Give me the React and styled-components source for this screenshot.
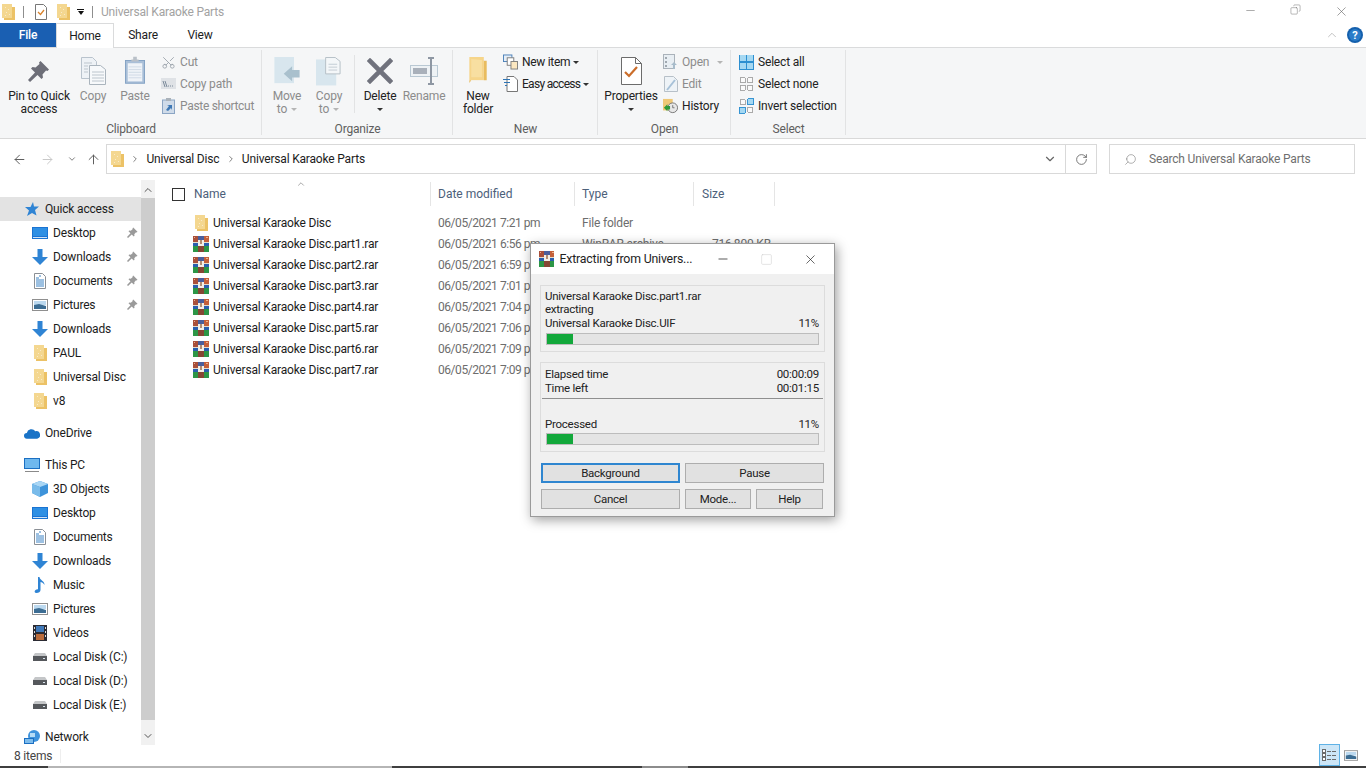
import React from "react";
import styled, { createGlobalStyle } from "styled-components";
import { ArrowLeft, ArrowRight, ArrowUp, ChevronDown, ChevronRight, ChevronUp, RotateCw, Search, Scissors, Minus, X, Square, Copy as CopyIc } from "lucide-react";

const Global = createGlobalStyle`
  html, body { margin: 0; padding: 0; background: #fff; overflow: hidden; }
  body { font-family: Roboto, "Noto Sans", sans-serif; font-size: 12px; letter-spacing: -0.18px; color: #1c1c1c; }
  * { box-sizing: border-box; }
`;

/* ---------- drawn icons ---------- */
const Folder = ({ w = 13, h = 16 }) => (
  <svg width={w} height={h} viewBox="0 0 13 16">
    <path d="M0 0h10v14H0z" fill="#f6dc9c" />
    <path d="M0 0h10v14H0z" fill="#f2cf7c" opacity=".35" />
    <path d="M10 3h3v13H2v-2h8z" fill="#ecc266" />
    <path d="M3 3h1v1H3zM6 5h1v1H6zM4 8h1v1H4zM7 10h1v1H7zM3 11h1v1H3z" fill="#fff" opacity=".5" />
  </svg>
);
const Rar = ({ s = 16 }) => (
  <svg width={s} height={s} viewBox="0 0 16 16" shapeRendering="crispEdges">
    <rect x="0" y="0" width="5" height="7" fill="#a9503a" />
    <rect x="5" y="0" width="6" height="5" fill="#4a5f9c" />
    <rect x="11" y="0" width="5" height="7" fill="#c4603a" />
    <rect x="1" y="1" width="1" height="1" fill="#e9b08f" />
    <rect x="13" y="1" width="2" height="1" fill="#efb48d" />
    <rect x="0" y="7" width="5" height="3" fill="#2a5fae" />
    <rect x="0" y="10" width="5" height="6" fill="#2c9646" />
    <rect x="5" y="10" width="6" height="6" fill="#864634" />
    <rect x="11" y="7" width="5" height="3" fill="#2a5fae" />
    <rect x="11" y="10" width="5" height="6" fill="#2c9646" />
    <rect x="5" y="4" width="6" height="6" fill="#f4efe6" />
    <rect x="7" y="4" width="2" height="4" fill="#b28d73" />
    <rect x="0" y="6" width="5" height="1" fill="#e6dccb" />
    <rect x="11" y="6" width="5" height="1" fill="#e6dccb" />
  </svg>
);
const Pin = ({ s = 22, c = "#6d6e78" }) => (
  <svg width={s} height={s} viewBox="0 0 22 22">
    <path d="M12.500 1L21 9.500l-1.500 1.500-1.500-.5-3.500 4 .5 3-1.500 1.500-4-4L2 22l-2-2 7-7.500-4-4L4.500 7l3 .5 4-3.500L11 2.500z" fill={c} />
  </svg>
);
const DocPair = () => (
  <svg width="25" height="28" viewBox="0 0 25 28">
    <path d="M.5.5h11l4 4v17H.5z" fill="#eef2f6" stroke="#b9c3cd" />
    <path d="M8.500 8.500h11l5 4v15h-16z" fill="#f7f9fb" stroke="#aab4bd" />
    <path d="M11 15h12M11 18h12M11 21h12M11 24h12M3 6h8M3 9h4M3 12h4M3 15h4" stroke="#bcc5cd" />
  </svg>
);
const Clip = () => (
  <svg width="20" height="29" viewBox="0 0 22 30">
    <rect x=".5" y="4" width="21" height="25" fill="#a9bfd8" stroke="#7f9fc2" />
    <rect x="3" y="7" width="16" height="20" fill="#eff3f8" />
    <path d="M4 11h14M4 14h14M4 17h14M4 20h14M4 23h14" stroke="#cdd8e4" />
    <path d="M7 5h8V3h-2V0H9v3H7z" fill="#b9c0c8" />
  </svg>
);
const Scis = () => <Scissors size={15} color="#9aa2aa" strokeWidth={1.4} style={{ transform: "rotate(-90deg)" }} />;
const PathIc = () => (
  <svg width="15" height="12" viewBox="0 0 15 12">
    <rect width="15" height="11" fill="#dfe2e6" />
    <path d="M2 3l2 6M4 3l2 6M7 8h1M9 8h1M11 8h1" stroke="#7b8a9a" />
  </svg>
);
const ShortcutIc = () => (
  <svg width="13" height="16" viewBox="0 0 13 16">
    <rect x=".5" y="2" width="12" height="13.500" fill="#cfdbe9" stroke="#8ba5c4" />
    <path d="M4 0h5v3H4z" fill="#aab2ba" />
    <path d="M4 12l3-4-2-1h5v5l-1-2-3 3z" fill="#3e78b5" />
  </svg>
);
const MoveIc = () => (
  <svg width="26" height="28" viewBox="0 0 27 30">
    <rect width="21" height="28" fill="#d8e6ee" />
    <path d="M10 18l9-8v4h8v8h-8v4z" fill="#a9c0cd" />
  </svg>
);
const CopyToIc = () => (
  <svg width="26" height="30" viewBox="0 0 27 30">
    <rect y="3" width="21" height="27" fill="#d8e6ee" />
    <path d="M10 1h10l5 4v13H10z" fill="#f4f7f9" stroke="#b4bec6" />
    <path d="M13 8h9M13 11h9M13 14h9" stroke="#c3ccd3" />
  </svg>
);
const DeleteIc = () => (
  <svg width="26" height="26" viewBox="0 0 26 26">
    <path d="M3 3l20 20M23 3L3 23" stroke="#70727d" strokeWidth="4.600" strokeLinecap="square" />
  </svg>
);
const RenameIc = () => (
  <svg width="29" height="28" viewBox="0 0 29 28">
    <rect x=".5" y="8.500" width="27" height="11" fill="#eef2f5" stroke="#b9c8d3" />
    <rect x="3" y="11" width="14" height="6" fill="#a9b0ba" />
    <path d="M21 1v26M18 1h6M18 27h6" stroke="#8e97a3" strokeWidth="2" />
  </svg>
);
const BigFolder = () => (
  <svg width="19" height="27" viewBox="0 0 19 28">
    <path d="M0 0h15v24H0z" fill="#f6d58a" />
    <path d="M15 4h3v20H2l-2 3V24h15z" fill="#e9bc5e" />
    <path d="M2 2l11 1v18H2z" fill="#f9e2ab" opacity=".7" />
  </svg>
);
const NewItemIc = () => (
  <svg width="16" height="16" viewBox="0 0 16 16">
    <rect x=".5" y=".5" width="9" height="7" fill="#e5eef7" stroke="#4a7fb8" />
    <rect x="4.500" y="3.500" width="7" height="8" fill="#fff" stroke="#7d7d7d" />
    <rect x="8.500" y="7.500" width="7" height="8" fill="#fbe7c0" stroke="#7d7d7d" />
  </svg>
);
const EasyIc = () => (
  <svg width="15" height="16" viewBox="0 0 15 16">
    <path d="M4 .5h7l3.500 3.500v11.500H4z" fill="#fff" stroke="#777" />
    <path d="M0 3.500h7M1 6.500h6M2 9.500h2" stroke="#2f75b5" />
  </svg>
);
const PropsIc = () => (
  <svg width="21" height="28" viewBox="0 0 21 28">
    <path d="M.5.500h14l6 6v21H.5z" fill="#fff" stroke="#6c6c6c" />
    <path d="M14.500.5v6h6" fill="none" stroke="#6c6c6c" />
    <path d="M4 15l4 4 8-9" fill="none" stroke="#cb6d2a" strokeWidth="2.200" />
  </svg>
);
const SmallProps = () => (
  <svg width="12" height="16" viewBox="0 0 12 16">
    <path d="M.5.500h8l3 3v12H.5z" fill="#fff" stroke="#777" />
    <path d="M3 8l2.500 2.500L9 6" fill="none" stroke="#d9822b" strokeWidth="1.300" />
  </svg>
);
const OpenIc = () => (
  <svg width="15" height="16" viewBox="0 0 15 16">
    <rect x=".5" y=".5" width="11" height="14" fill="#e8eef3" stroke="#aab2ba" />
    <path d="M2 3h2v2H2zM2 7h2v2H2zM2 11h2v2H2z" fill="#a0a8b0" />
    <path d="M11 8l3 3h-2v4h-2v-4H8z" fill="#a8bccb" />
  </svg>
);
const EditIc = () => (
  <svg width="14" height="16" viewBox="0 0 14 16">
    <path d="M.5.500h9l4 4v11H.5z" fill="#eef3f7" stroke="#b7c0c8" />
    <path d="M3 14l8-10" stroke="#a7c1d8" strokeWidth="2" />
  </svg>
);
const HistoryIc = () => (
  <svg width="17" height="16" viewBox="0 0 17 16">
    <rect width="11" height="13" fill="#efc876" />
    <circle cx="11" cy="10" r="5.500" fill="#e7e7e7" stroke="#6d6d6d" />
    <path d="M11 7v3h2" fill="none" stroke="#6d6d6d" />
    <path d="M1 10l4-4v2h3v4H5v2z" fill="#2f9a3a" />
  </svg>
);
const SelAll = () => (
  <svg width="16" height="16" viewBox="0 0 16 16" shapeRendering="crispEdges">
    <rect width="16" height="16" fill="#2d8fd0" />
    <path d="M1 1h6v6H1zM9 1h6v6H9zM1 9h6v6H1zM9 9h6v6H9z" fill="#a5d8f2" />
  </svg>
);
const SelNone = () => (
  <svg width="16" height="16" viewBox="0 0 16 16" shapeRendering="crispEdges">
    <path d="M1.500 1.500h5v5h-5zM9.500 1.500h5v5h-5zM1.500 9.500h5v5h-5zM9.500 9.500h5v5h-5z" fill="#fafafa" stroke="#a4a4a4" />
  </svg>
);
const SelInv = () => (
  <svg width="16" height="16" viewBox="0 0 16 16" shapeRendering="crispEdges">
    <path d="M1.500 1.500h5v5h-5zM9.500 9.500h5v5h-5z" fill="#fafafa" stroke="#a4a4a4" />
    <path d="M9.500 .5h6v6h-6zM.5 9.500h6v6h-6z" fill="#a5d8f2" stroke="#2d8fd0" />
  </svg>
);
const Star = () => (
  <svg width="14" height="14" viewBox="0 0 14 14">
    <path d="M8 0l1 4.500h5L10 8l1.500 5.500L7 11l-5 3 2-5.500L0 5h5.500z" fill="#2f84d4" />
  </svg>
);
const Monitor = () => (
  <svg width="16" height="12" viewBox="0 0 16 12" shapeRendering="crispEdges">
    <rect width="16" height="12" fill="#1a73d2" />
    <rect x="1" y="1" width="14" height="8" fill="#2d8fe4" />
    <rect x="1" y="10" width="14" height="1" fill="#cfe2f6" />
  </svg>
);
const Down = () => (
  <svg width="16" height="16" viewBox="0 0 16 16">
    <path d="M5.500 0h5v8H16l-8 8-8-8h5.500z" fill="#2f84d4" />
  </svg>
);
const Docs = () => (
  <svg width="12" height="16" viewBox="0 0 12 16">
    <path d="M.5.500h8l3 3v12H.5z" fill="#fff" stroke="#8a8f95" />
    <path d="M2 5h3M2 7h8M2 9h8M2 11h8M2 13h8M5 3h2" stroke="#3b82c4" />
  </svg>
);
const Pics = ({ w = 16, h = 12 }) => (
  <svg width={w} height={h} viewBox="0 0 16 12">
    <rect x=".5" y=".5" width="15" height="11" fill="#fff" stroke="#8f8f8f" />
    <rect x="2" y="2" width="12" height="4" fill="#bcd9ef" />
    <path d="M2 6l5-1 7 2v3H2z" fill="#3c6d93" />
  </svg>
);
const Cloud = () => (
  <svg width="17" height="11" viewBox="0 0 17 11">
    <path d="M3 11a3 3 0 010-6 5 5 0 019-2 4 4 0 012 8z" fill="#1a73c7" />
  </svg>
);
const PC = () => (
  <svg width="16" height="15" viewBox="0 0 16 15" shapeRendering="crispEdges">
    <rect width="16" height="11" fill="#1b6fc2" />
    <rect x="1" y="1" width="14" height="9" fill="#6fb8ee" />
    <rect x="1" y="13" width="14" height="1" fill="#8a8a8a" />
  </svg>
);
const Cube = () => (
  <svg width="16" height="16" viewBox="0 0 16 16">
    <path d="M8 0l8 3v9l-8 4-8-4V3z" fill="#3d93da" />
    <path d="M8 0l8 3-8 3-8-3z" fill="#a9d6f4" />
    <path d="M0 3l8 3v10l-8-4z" fill="#79bbea" />
  </svg>
);
const Music = () => (
  <svg width="12" height="16" viewBox="0 0 12 16">
    <path d="M4 0h1.500c0 3 5.500 4 5 8-1-2-3-3-4-3v8c0 2-2 3-4 3s-2.500-2-1-3 2-1 2.500-.5z" fill="#2f84d4" />
  </svg>
);
const Film = () => (
  <svg width="14" height="16" viewBox="0 0 14 16" shapeRendering="crispEdges">
    <rect width="14" height="16" fill="#2b2b33" />
    <rect x="3" y="1" width="8" height="6" fill="#3f78b8" />
    <rect x="3" y="9" width="8" height="6" fill="#bb6c3c" />
    <path d="M1 2h1v2H1zM1 6h1v2H1zM1 10h1v2H1zM12 2h1v2h-1zM12 6h1v2h-1zM12 10h1v2h-1z" fill="#ddd" />
  </svg>
);
const Disk = () => (
  <svg width="14" height="8" viewBox="0 0 14 8">
    <path d="M2 0h10l2 3H0z" fill="#c4c6c8" />
    <rect y="3" width="14" height="5" fill="#55585c" />
    <rect x="10" y="5" width="2" height="1" fill="#d9e4ee" />
  </svg>
);
const Net = () => (
  <svg width="16" height="15" viewBox="0 0 16 15">
    <circle cx="10" cy="6" r="6" fill="#3f93dc" />
    <path d="M6 3h5v4H6z" fill="#b6dcf6" />
    <rect y="8" width="10" height="6" fill="#1b6fc2" />
    <rect x="1" y="9" width="8" height="4" fill="#7ebcec" />
  </svg>
);
const Help = () => (
  <svg width="16" height="16" viewBox="0 0 16 16">
    <circle cx="8" cy="8" r="8" fill="#1560ad" />
    <circle cx="8" cy="8" r="6" fill="#2b7cc9" />
    <text x="8" y="12" textAnchor="middle" fontSize="11" fontWeight="700" fill="#fff" fontFamily="Roboto">?</text>
  </svg>
);
const DetailsIc = () => (
  <svg width="15" height="14" viewBox="0 0 15 14" shapeRendering="crispEdges">
    <path d="M.5 1.500h3v3h-3zM.5 5.500h3v3h-3zM.5 9.500h3v3h-3z" fill="#fff" stroke="#6b6b6b" />
    <path d="M5 3h4M10 3h4M5 7h4M10 7h4M5 11h4M10 11h4" stroke="#6b6b6b" />
  </svg>
);

/* ---------- shell ---------- */
const Shell = styled.div`
  position: relative;
  width: 1366px;
  height: 768px;
  display: flex;
  flex-direction: column;
  overflow: hidden;
  background: #fff;
`;
const TitleBar = styled.div`
  height: 23px;
  display: flex;
  align-items: center;
  padding-left: 2px;
`;
const QatIcon = styled.span`
  display: flex;
  margin-left: ${(p) => p.$ml || 0}px;
`;
const QatSep = styled.span`
  width: 1px;
  height: 12px;
  background: #8e8e8e;
  margin-left: ${(p) => p.$ml || 0}px;
`;
const QatDrop = styled.span`
  display: flex;
  flex-direction: column;
  align-items: center;
  gap: 1px;
  margin-left: 7px;
  &::before { content: ""; width: 7px; height: 1px; background: #111; }
  &::after { content: ""; border: 3.5px solid transparent; border-top: 4px solid #111; border-bottom: 0; }
`;
const WinTitle = styled.span`
  margin-left: 8px;
  color: #a2a2a2;
`;
const WinCtrls = styled.div`
  margin-left: auto;
  display: flex;
  color: #666;
  margin-top: -1px;
  padding-right: 2px;
`;
const WinCtrl = styled.span`
  width: 45.500px;
  display: flex;
  justify-content: center;
`;
const TabBar = styled.div`
  height: 24px;
  display: flex;
  align-items: stretch;
  position: relative;
`;
const FileTab = styled.div`
  width: 56px;
  background: #1a5fb2;
  color: #fff;
  display: flex;
  align-items: center;
  justify-content: center;
  font-weight: 500;
`;
const Tab = styled.div`
  width: ${(p) => p.$w}px;
  display: flex;
  align-items: center;
  justify-content: center;
  background: #fff;
  ${(p) => p.$on && `border: 1px solid #dadbdc; border-bottom: 0; z-index: 1; margin-bottom: -1px; height: 25px;`}
`;
const TabEnd = styled.div`
  margin-left: auto;
  display: flex;
  align-items: center;
  gap: 8px;
  padding-right: 3px;
  color: #a8a8a8;
`;
const Ribbon = styled.div`
  height: 92px;
  display: flex;
  background: #f5f6f7;
  border-top: 1px solid #dadbdc;
  border-bottom: 1px solid #d9d9d9;
`;
const Group = styled.section`
  width: ${(p) => p.$w}px;
  display: flex;
  flex-direction: column;
  padding-top: 3px;
  position: relative;
  &::after {
    content: "";
    position: absolute;
    right: 0;
    top: 2px;
    bottom: 3px;
    width: 1px;
    background: #e2e3e4;
  }
`;
const GroupBody = styled.div`
  height: 71px;
  display: flex;
  padding-left: ${(p) => p.$pl || 0}px;
`;
const GroupLabel = styled.div`
  text-align: center;
  color: #5e5e5e;
  line-height: 16px;
  margin-top: auto;
  height: 17px;
`;
const Large = styled.div`
  width: ${(p) => p.$w}px;
  flex: none;
  display: flex;
  flex-direction: column;
  align-items: center;
  text-align: center;
  line-height: 13px;
  color: ${(p) => (p.$off ? "#8c8c8c" : "#222")};
`;
const LargeIcon = styled.div`
  height: 39px;
  display: flex;
  align-items: center;
  justify-content: center;
`;
const LargeText = styled.div`
  white-space: nowrap;
`;
const Caret = styled.i`
  display: inline-block;
  border: 3px solid transparent;
  border-top: 3px solid ${(p) => (p.$off ? "#b5b5b5" : "#333")};
  border-bottom: 0;
  vertical-align: middle;
  margin-left: ${(p) => p.$ml ?? 4}px;
`;
const VSep = styled.div`
  width: 1px;
  height: 58px;
  background: #e2e3e4;
  margin: 4px 3px 0 4px;
  flex: none;
`;
const SmallCol = styled.div`
  display: flex;
  flex-direction: column;
  margin-left: ${(p) => p.$ml || 0}px;
`;
const Small = styled.div`
  height: 22px;
  display: flex;
  align-items: center;
  gap: 4px;
  color: ${(p) => (p.$off ? "#8c8c8c" : "#222")};
  white-space: nowrap;
  letter-spacing: ${(p) => p.$ls ?? -0.18}px;
`;
const SmallIcon = styled.span`
  width: ${(p) => p.$w || 15}px;
  display: flex;
  justify-content: center;
`;
const AddressRow = styled.div`
  height: 41px;
  flex: none;
  display: flex;
  align-items: center;
  padding: 0 0 1px 11px;
`;
const NavBtn = styled.span`
  display: flex;
  flex: none;
  width: ${(p) => p.$w}px;
  margin-left: ${(p) => p.$ml || 0}px;
  justify-content: center;
  color: ${(p) => p.$c};
  svg { flex: none; }
`;
const Field = styled.div`
  height: 30px;
  border: 1px solid #d9d9d9;
  display: flex;
  align-items: center;
`;
const AddressBox = styled(Field)`
  width: 991px;
  margin-left: 5px;
  padding-left: 4px;
`;
const Crumb = styled.span`
  color: #1c1c1c;
`;
const CrumbChev = styled.span`
  display: flex;
  width: 22.500px;
  justify-content: center;
  color: #666;
`;
const BoxBtn = styled.span`
  width: 31px;
  height: 100%;
  display: flex;
  align-items: center;
  justify-content: center;
  color: #666;
  border-left: ${(p) => (p.$line ? "1px solid #d9d9d9" : "0")};
  margin-left: ${(p) => (p.$auto ? "auto" : "0")};
`;
const SearchBox = styled(Field)`
  width: 246px;
  margin-left: 12px;
  padding-left: 14px;
  gap: 12px;
  color: #6f6f6f;
`;
const Main = styled.div`
  flex: 1;
  display: flex;
  min-height: 0;
`;
const Nav = styled.nav`
  width: 141px;
  padding-top: 17px;
  flex: none;
`;
const NavRow = styled.div`
  height: 24px;
  display: flex;
  align-items: center;
  padding-left: ${(p) => (p.$top ? 24 : 32)}px;
  margin-bottom: ${(p) => (p.$end ? 8 : 0)}px;
  background: ${(p) => (p.$on ? "#e3e3e3" : "transparent")};
  white-space: nowrap;
  position: relative;
`;
const NavIcon = styled.span`
  width: 16px;
  height: 16px;
  display: flex;
  align-items: center;
  justify-content: center;
  margin-right: 5px;
`;
const PinMark = styled.span`
  position: absolute;
  right: 3px;
  top: 6px;
  display: flex;
`;
const ScrollBar = styled.div`
  width: 14px;
  flex: none;
  display: flex;
  flex-direction: column;
  background: #f1f1f1;
  color: #555;
  padding: 2px 0 1px;
`;
const ScrollBtn = styled.div`
  height: 16px;
  display: flex;
  align-items: center;
  justify-content: center;
  flex: none;
`;
const Thumb = styled.div`
  height: 522px;
  background: #cdcdcd;
  flex: none;
`;
const ScrollGap = styled.div`
  flex: 1;
`;
const List = styled.div`
  flex: 1;
  padding-top: 2px;
`;
const HeadRow = styled.div`
  height: 24px;
  display: grid;
  grid-template-columns: 276px 144px 119px 81px;
  margin-bottom: 6px;
  color: #4c607a;
  position: relative;
  letter-spacing: 0;
`;
const HeadCell = styled.div`
  display: flex;
  align-items: center;
  padding-left: ${(p) => p.$pl || 7}px;
  border-right: 1px solid #e5e5e5;
`;
const Check = styled.span`
  width: 13px;
  height: 13px;
  border: 1px solid #333;
  margin-right: 9px;
`;
const SortMark = styled.span`
  position: absolute;
  left: 141px;
  top: -3px;
  display: flex;
  color: #777;
`;
const Row = styled.div`
  height: 21px;
  display: grid;
  grid-template-columns: 276px 144px 119px 81px;
  align-items: center;
  color: #6d6d6d;
`;
const NameCell = styled.div`
  display: flex;
  align-items: center;
  padding-left: ${(p) => p.$pl}px;
  gap: ${(p) => p.$gap}px;
  color: #1c1c1c;
  white-space: nowrap;
`;
const Cell = styled.div`
  padding-left: 7px;
  white-space: nowrap;
`;
const DateCell = styled(Cell)`
  letter-spacing: -0.45px;
`;
const SizeCell = styled(Cell)`
  text-align: right;
  padding-right: 4px;
`;
const Status = styled.div`
  height: 21px;
  flex: none;
  display: flex;
  align-items: flex-start;
  padding-left: 14px;
  color: #444;
`;
const StatusText = styled.span`
  height: 21px;
  line-height: 23px;
`;
const StatSep = styled.span`
  width: 1px;
  height: 14px;
  background: #eee;
  margin: 4px 0 0 8px;
`;
const Views = styled.div`
  margin-left: auto;
  margin-top: -1px;
  display: flex;
  align-items: center;
  gap: 4px;
  padding-right: 8px;
  height: 22px;
`;
const ViewOn = styled.span`
  width: 21px;
  height: 22px;
  background: #cde6f7;
  border: 1px solid #5fb2e6;
  display: flex;
  align-items: center;
  justify-content: center;
`;
const TaskEdge = styled.div`
  height: 2px;
  flex: none;
  display: grid;
  grid-template-columns: 48px 344px 250px 46px 1fr;
`;
const Seg = styled.span`
  background: ${(p) => p.$c};
`;

/* ---------- dialog ---------- */
const Dialog = styled.div`
  position: absolute;
  left: 530px;
  top: 243px;
  width: 305px;
  height: 274px;
  background: #f0f0f0;
  border: 1px solid #9a9a9a;
  box-shadow: 2px 3px 11px rgba(0, 0, 0, 0.38);
  display: flex;
  flex-direction: column;
  font-size: 11.500px;
  letter-spacing: -0.25px;
  color: #222;
`;
const DlgTitle = styled.div`
  height: 30px;
  flex: none;
  background: #fff;
  display: flex;
  align-items: center;
  padding-left: 8px;
  font-size: 12.300px;
  letter-spacing: -0.18px;
  color: #222;
`;
const DlgName = styled.span`
  margin-left: 5px;
  width: 146px;
  white-space: nowrap;
`;
const DlgCtrl = styled.span`
  width: ${(p) => p.$w}px;
  display: flex;
  justify-content: center;
  color: ${(p) => p.$c || "#111"};
`;
const DlgBody = styled.div`
  flex: 1;
  padding: 11px 9px 0 9px;
  display: flex;
  flex-direction: column;
`;
const Box = styled.div`
  border: 1px solid #dcdcdc;
  height: ${(p) => p.$h}px;
  margin-bottom: 10px;
  padding: ${(p) => p.$pt}px 5px 0 4px;
  display: flex;
  flex-direction: column;
`;
const Line = styled.div`
  height: ${(p) => p.$h || 14}px;
  line-height: ${(p) => p.$h || 14}px;
  margin-top: ${(p) => p.$mt || 0}px;
  display: flex;
  justify-content: space-between;
  white-space: nowrap;
`;
const Track = styled.div`
  height: 12px;
  margin: ${(p) => p.$mt || 3}px 0 0 1px;
  background: #e4e4e4;
  border: 1px solid #bcbcbc;
  width: 273px;
`;
const Fill = styled.div`
  height: 100%;
  background: #12a83b;
`;
const Rule = styled.div`
  height: 1px;
  background: #8f8f8f;
  margin: 3px -4px 0 -3px;
`;
const BtnGrid = styled.div`
  display: grid;
  grid-template-columns: 139px 66px 67px;
  column-gap: 5px;
  row-gap: 6px;
  margin: 1px 0 0 1px;
`;
const Btn = styled.div`
  height: 20px;
  display: flex;
  align-items: center;
  justify-content: center;
  background: #e1e1e1;
  border: ${(p) => (p.$focus ? "2px solid #2f86d0" : "1px solid #adadad")};
  grid-column: ${(p) => p.$span || "auto"};
`;

const files = [
  ["1", "6:56"], ["2", "6:59"], ["3", "7:01"], ["4", "7:04"], ["5", "7:06"], ["6", "7:09"], ["7", "7:09"],
];

const navA = [
  [Monitor, "Desktop", 1], [Down, "Downloads", 1], [Docs, "Documents", 1], [Pics, "Pictures", 1],
  [Down, "Downloads"], [Folder, "PAUL"], [Folder, "Universal Disc"], [Folder, "v8"],
];
const navB = [
  [Cube, "3D Objects"], [Monitor, "Desktop"], [Docs, "Documents"], [Down, "Downloads"], [Music, "Music"],
  [Pics, "Pictures"], [Film, "Videos"], [Disk, "Local Disk (C:)"], [Disk, "Local Disk (D:)"], [Disk, "Local Disk (E:)"],
];

export default function App() {
  return (
    <Shell>
      <Global />
      <TitleBar>
        <QatIcon><Folder /></QatIcon>
        <QatSep $ml={8} />
        <QatIcon $ml={11}><SmallProps /></QatIcon>
        <QatIcon $ml={10}><Folder /></QatIcon>
        <QatDrop />
        <QatSep $ml={8} />
        <WinTitle>Universal Karaoke Parts</WinTitle>
        <WinCtrls>
          <WinCtrl><Minus size={13} strokeWidth={1} /></WinCtrl>
          <WinCtrl><CopyIc size={11} strokeWidth={1} style={{ transform: "scaleX(-1)" }} /></WinCtrl>
          <WinCtrl><X size={15} strokeWidth={1} /></WinCtrl>
        </WinCtrls>
      </TitleBar>
      <TabBar>
        <FileTab>File</FileTab>
        <Tab $w={58} $on>Home</Tab>
        <Tab $w={58}>Share</Tab>
        <Tab $w={56}>View</Tab>
        <TabEnd>
          <ChevronUp size={14} strokeWidth={1.2} />
          <Help />
        </TabEnd>
      </TabBar>
      <Ribbon>
        <Group $w={262}>
          <GroupBody>
            <Large $w={78}><LargeIcon><Pin /></LargeIcon><LargeText>Pin to Quick<br />access</LargeText></Large>
            <Large $w={30} $off><LargeIcon><DocPair /></LargeIcon><LargeText>Copy</LargeText></Large>
            <Large $w={54} $off><LargeIcon><Clip /></LargeIcon><LargeText>Paste</LargeText></Large>
            <SmallCol $ml={-1}>
              <Small $off><SmallIcon><Scis /></SmallIcon>Cut</Small>
              <Small $off><SmallIcon><PathIc /></SmallIcon>Copy path</Small>
              <Small $off $ls={-0.3}><SmallIcon><ShortcutIc /></SmallIcon>Paste shortcut</Small>
            </SmallCol>
          </GroupBody>
          <GroupLabel>Clipboard</GroupLabel>
        </Group>
        <Group $w={191}>
          <GroupBody $pl={4}>
            <Large $w={42} $off><LargeIcon><MoveIc /></LargeIcon><LargeText>Move<br />to<Caret $off /></LargeText></Large>
            <Large $w={42} $off><LargeIcon><CopyToIc /></LargeIcon><LargeText>Copy<br />to<Caret $off /></LargeText></Large>
            <VSep />
            <Large $w={44}><LargeIcon><DeleteIc /></LargeIcon><LargeText>Delete<br /><Caret $ml={0} /></LargeText></Large>
            <Large $w={44} $off><LargeIcon><RenameIc /></LargeIcon><LargeText>Rename</LargeText></Large>
          </GroupBody>
          <GroupLabel>Organize</GroupLabel>
        </Group>
        <Group $w={145}>
          <GroupBody $pl={5}>
            <Large $w={40}><LargeIcon><BigFolder /></LargeIcon><LargeText>New<br />folder</LargeText></Large>
            <SmallCol $ml={5}>
              <Small $ls={-0.3}><SmallIcon><NewItemIc /></SmallIcon>New item<Caret $ml={-1} /></Small>
              <Small $ls={-0.7}><SmallIcon><EasyIc /></SmallIcon>Easy access<Caret $ml={-1} /></Small>
            </SmallCol>
          </GroupBody>
          <GroupLabel>New</GroupLabel>
        </Group>
        <Group $w={133}>
          <GroupBody $pl={6}>
            <Large $w={54}><LargeIcon><PropsIc /></LargeIcon><LargeText>Properties<br /><Caret $ml={0} /></LargeText></Large>
            <SmallCol $ml={5}>
              <Small $off><SmallIcon><OpenIc /></SmallIcon>Open<Caret $off /></Small>
              <Small $off><SmallIcon><EditIc /></SmallIcon>Edit</Small>
              <Small><SmallIcon><HistoryIc /></SmallIcon>History</Small>
            </SmallCol>
          </GroupBody>
          <GroupLabel>Open</GroupLabel>
        </Group>
        <Group $w={115}>
          <GroupBody $pl={8}>
            <SmallCol>
              <Small><SmallIcon><SelAll /></SmallIcon>Select all</Small>
              <Small><SmallIcon><SelNone /></SmallIcon>Select none</Small>
              <Small><SmallIcon><SelInv /></SmallIcon>Invert selection</Small>
            </SmallCol>
          </GroupBody>
          <GroupLabel>Select</GroupLabel>
        </Group>
      </Ribbon>
      <AddressRow>
        <NavBtn $w={16} $c="#5f5f5f"><ArrowLeft size={15} strokeWidth={1.6} /></NavBtn>
        <NavBtn $w={41} $c="#c9c9c9"><ArrowRight size={15} strokeWidth={1.6} /></NavBtn>
        <NavBtn $w={8} $c="#666"><ChevronDown size={10} strokeWidth={2} /></NavBtn>
        <NavBtn $w={16} $ml={9} $c="#5f5f5f"><ArrowUp size={15} strokeWidth={1.6} /></NavBtn>
        <AddressBox>
          <Folder />
          <CrumbChev><ChevronRight size={10} strokeWidth={2} /></CrumbChev>
          <Crumb>Universal Disc</Crumb>
          <CrumbChev><ChevronRight size={10} strokeWidth={2} /></CrumbChev>
          <Crumb>Universal Karaoke Parts</Crumb>
          <BoxBtn $auto><ChevronDown size={14} strokeWidth={2} /></BoxBtn>
          <BoxBtn $line><RotateCw size={13} strokeWidth={1.6} /></BoxBtn>
        </AddressBox>
        <SearchBox>
          <Search size={13} strokeWidth={1} style={{ transform: "scaleX(-1)" }} />
          Search Universal Karaoke Parts
        </SearchBox>
      </AddressRow>
      <Main>
        <Nav>
          <NavRow $top $on><NavIcon><Star /></NavIcon>Quick access</NavRow>
          {navA.map(([I, t, pin], i) => (
            <NavRow key={t + i} $end={i === navA.length - 1}>
              <NavIcon><I /></NavIcon>{t}
              {pin && <PinMark><Pin s={11} c="#9a9a9a" /></PinMark>}
            </NavRow>
          ))}
          <NavRow $top $end><NavIcon><Cloud /></NavIcon>OneDrive</NavRow>
          <NavRow $top><NavIcon><PC /></NavIcon>This PC</NavRow>
          {navB.map(([I, t], i) => (
            <NavRow key={t + i} $end={i === navB.length - 1}><NavIcon><I /></NavIcon>{t}</NavRow>
          ))}
          <NavRow $top><NavIcon><Net /></NavIcon>Network</NavRow>
        </Nav>
        <ScrollBar>
          <ScrollBtn><ChevronUp size={12} strokeWidth={2} /></ScrollBtn>
          <Thumb />
          <ScrollGap />
          <ScrollBtn><ChevronDown size={12} strokeWidth={2} /></ScrollBtn>
        </ScrollBar>
        <List>
          <HeadRow>
            <HeadCell $pl={17}><Check />Name</HeadCell>
            <HeadCell>Date modified</HeadCell>
            <HeadCell>Type</HeadCell>
            <HeadCell $pl={8}>Size</HeadCell>
            <SortMark><ChevronUp size={10} strokeWidth={1.5} /></SortMark>
          </HeadRow>
          <Row>
            <NameCell $pl={40} $gap={5}><Folder />Universal Karaoke Disc</NameCell>
            <DateCell>06/05/2021 7:21 pm</DateCell>
            <Cell>File folder</Cell>
            <Cell />
          </Row>
          {files.map(([n, t]) => (
            <Row key={n}>
              <NameCell $pl={38} $gap={4}><Rar />Universal Karaoke Disc.part{n}.rar</NameCell>
              <DateCell>06/05/2021 {t} pm</DateCell>
              <Cell>WinRAR archive</Cell>
              <SizeCell>716,800 KB</SizeCell>
            </Row>
          ))}
        </List>
      </Main>
      <Status>
        <StatusText>8 items</StatusText><StatSep />
        <Views>
          <ViewOn><DetailsIc /></ViewOn>
          <Pics w={14} h={11} />
        </Views>
      </Status>
      <TaskEdge>
        <Seg $c="#3f3f3f" />
        <Seg $c="#b5b5b5" />
        <Seg $c="#3f3f3f" />
        <Seg $c="#8c8c8c" />
        <Seg $c="#3f3f3f" />
      </TaskEdge>
      <Dialog>
        <DlgTitle>
          <Rar />
          <DlgName>Extracting from Univers...</DlgName>
          <DlgCtrl $w={46}><Minus size={14} strokeWidth={1.2} /></DlgCtrl>
          <DlgCtrl $w={44} $c="#cfcfcf"><Square size={13} strokeWidth={1} /></DlgCtrl>
          <DlgCtrl $w={48}><X size={15} strokeWidth={1} /></DlgCtrl>
        </DlgTitle>
        <DlgBody>
          <Box $h={67} $pt={4}>
            <Line $h={13}>Universal Karaoke Disc.part1.rar</Line>
            <Line $h={13}>extracting</Line>
            <Line $h={14}>Universal Karaoke Disc.UIF<span>11%</span></Line>
            <Track><Fill style={{ width: "9.5%" }} /></Track>
          </Box>
          <Box $h={90} $pt={4}>
            <Line>Elapsed time<span>00:00:09</span></Line>
            <Line>Time left<span>00:01:15</span></Line>
            <Rule />
            <Line $mt={18}>Processed<span>11%</span></Line>
            <Track $mt={2}><Fill style={{ width: "9.5%" }} /></Track>
          </Box>
          <BtnGrid>
            <Btn $focus>Background</Btn>
            <Btn $span="span 2" style={{ width: "139px" }}>Pause</Btn>
            <Btn>Cancel</Btn>
            <Btn>Mode...</Btn>
            <Btn>Help</Btn>
          </BtnGrid>
        </DlgBody>
      </Dialog>
    </Shell>
  );
}
